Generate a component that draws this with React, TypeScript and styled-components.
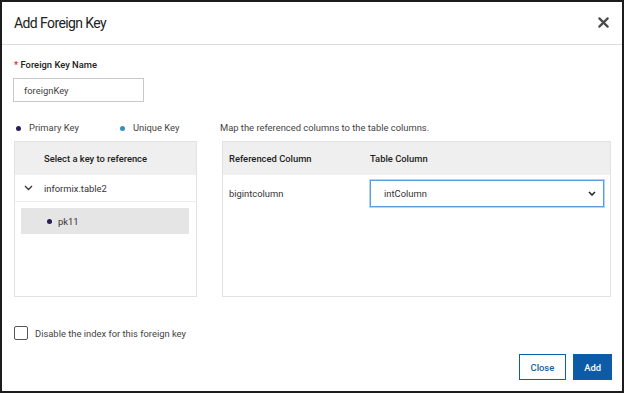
import React, { useState } from "react";
import styled, { createGlobalStyle } from "styled-components";

const GlobalStyle = createGlobalStyle`
  html, body {
    margin: 0;
    padding: 0;
    background: #fff;
  }
  * {
    box-sizing: border-box;
  }
`;

const App: React.FC = () => {
  const [keyName, setKeyName] = useState<string>("foreignKey");
  const [disableIndex, setDisableIndex] = useState<boolean>(false);

  return (
    <>
      <GlobalStyle />
      <Dialog>
        <Header>
          <Title>Add Foreign Key</Title>
          <CloseIcon aria-label="close">
            <svg width="11" height="11" viewBox="0 0 12 12">
              <path
                d="M1.5 1.5 L10.5 10.5 M10.5 1.5 L1.5 10.5"
                stroke="#4a4a4a"
                strokeWidth="2.4"
                strokeLinecap="round"
              />
            </svg>
          </CloseIcon>
        </Header>

        <Body>
          <FieldLabel>
            <Required>*</Required> Foreign Key Name
          </FieldLabel>
          <NameInput
            value={keyName}
            onChange={(e) => setKeyName(e.target.value)}
          />

          <Columns>
            <LeftColumn>
              <Legend>
                <LegendItem>
                  <Dot $color="#2b1b57" />
                  Primary Key
                </LegendItem>
                <LegendItem>
                  <Dot $color="#3a8ec2" />
                  Unique Key
                </LegendItem>
              </Legend>
              <Panel>
                <PanelHeader $indent={29}>Select a key to reference</PanelHeader>
                <TreeRow>
                  <Chevron>
                    <svg width="9" height="6" viewBox="0 0 9 6">
                      <path
                        d="M1 1 L4.5 4.5 L8 1"
                        stroke="#333"
                        strokeWidth="1.3"
                        fill="none"
                      />
                    </svg>
                  </Chevron>
                  informix.table2
                </TreeRow>
                <KeyRow>
                  <Dot $color="#2b1b57" />
                  pk11
                </KeyRow>
              </Panel>
            </LeftColumn>

            <RightColumn>
              <Caption>Map the referenced columns to the table columns.</Caption>
              <Panel>
                <MapHeader>
                  <RefCell>Referenced Column</RefCell>
                  <span>Table Column</span>
                </MapHeader>
                <MapRow>
                  <RefCell>bigintcolumn</RefCell>
                  <SelectBox>
                    intColumn
                    <svg width="8" height="5" viewBox="0 0 8 5">
                      <path
                        d="M1 1 L4 4 L7 1"
                        stroke="#222"
                        strokeWidth="1.5"
                        fill="none"
                      />
                    </svg>
                  </SelectBox>
                </MapRow>
              </Panel>
            </RightColumn>
          </Columns>

          <CheckRow>
            <CheckBox
              type="checkbox"
              checked={disableIndex}
              onChange={() => setDisableIndex((prev) => !prev)}
            />
            Disable the index for this foreign key
          </CheckRow>
        </Body>

        <Footer>
          <Button>Close</Button>
          <Button $primary>Add</Button>
        </Footer>
      </Dialog>
    </>
  );
};

const Dialog = styled.div`
  width: 624px;
  height: 393px;
  border: 2px solid #1c1c1c;
  background: #fff;
  display: flex;
  flex-direction: column;
  font-family: Roboto, "Liberation Sans", sans-serif;
  color: #333;
`;

const Header = styled.div`
  height: 43px;
  flex-shrink: 0;
  display: flex;
  align-items: center;
  justify-content: space-between;
  padding: 0 13px 0 12px;
  border-bottom: 1px solid #dcdcdc;
`;

const Title = styled.h1`
  margin: 0;
  font-size: 14px;
  letter-spacing: -0.6px;
  font-weight: 400;
  color: #222;
`;

const CloseIcon = styled.span`
  display: flex;
  margin-bottom: 2px;
  cursor: pointer;
`;

const Body = styled.div`
  flex: 1;
  padding: 14px 11px 0 12px;
  font-size: 9.4px;
`;

const FieldLabel = styled.div`
  line-height: 12px;
  font-weight: 500;
  color: #222;
  margin-bottom: 7px;
`;

const Required = styled.span`
  color: #d3262b;
`;

const NameInput = styled.input`
  display: block;
  width: 131px;
  height: 24px;
  margin: 0 0 0 -1px;
  padding: 0 0 0 10px;
  border: 1px solid #c9c9c9;
  font-family: inherit;
  font-size: 9.4px;
  color: #444;
  outline: none;
`;

const Columns = styled.div`
  display: grid;
  grid-template-columns: 183px 1fr;
  column-gap: 25px;
  margin-top: 20px;
`;

const LeftColumn = styled.div`
  display: flex;
  flex-direction: column;
`;

const RightColumn = styled.div`
  display: flex;
  flex-direction: column;
`;

const Legend = styled.div`
  display: flex;
  height: 12px;
  line-height: 12px;
  margin: 0 0 7px 2px;
`;

const LegendItem = styled.span`
  display: flex;
  align-items: center;
  gap: 8px;
  min-width: 104px;
  color: #444;
`;

const Dot = styled.span<{ $color: string }>`
  width: 5px;
  height: 5px;
  border-radius: 50%;
  background: ${(p) => p.$color};
  flex-shrink: 0;
`;

const Caption = styled.div`
  height: 12px;
  line-height: 12px;
  margin: 0 0 7px -2px;
  color: #444;
`;

const Panel = styled.div`
  height: 156px;
  border: 1px solid #e2e2e2;
  display: flex;
  flex-direction: column;
`;

const PanelHeader = styled.div<{ $indent: number }>`
  height: 33px;
  display: flex;
  align-items: center;
  padding-left: ${(p) => p.$indent}px;
  background: #efefef;
  font-weight: 500;
  color: #222;
`;

const TreeRow = styled.div`
  height: 27px;
  display: flex;
  align-items: center;
  padding-left: 9px;
  border-bottom: 1px solid #ececec;
  color: #333;
`;

const Chevron = styled.span`
  display: flex;
  width: 20px;
`;

const KeyRow = styled.div`
  height: 26px;
  margin: 6px 7px 0 6px;
  display: flex;
  align-items: center;
  gap: 6px;
  padding-left: 26px;
  background: #e5e5e5;
  color: #333;
`;

const MapHeader = styled.div`
  height: 33px;
  display: grid;
  grid-template-columns: 147px 1fr;
  align-items: center;
  background: #efefef;
  font-weight: 500;
  color: #222;
`;

const RefCell = styled.span`
  padding-left: 6px;
`;

const MapRow = styled.div`
  display: grid;
  grid-template-columns: 147px 1fr;
  align-items: center;
  padding: 5px 6px 0 0;
`;

const SelectBox = styled.div`
  height: 27px;
  display: flex;
  align-items: center;
  justify-content: space-between;
  padding: 0 7px 0 13px;
  border: 1px solid #5d9ed8;
  box-shadow: 0 0 0 1px #b4d4f0;
  color: #333;
`;

const CheckRow = styled.label`
  display: flex;
  align-items: center;
  gap: 7px;
  margin-top: 29px;
  color: #444;
`;

const CheckBox = styled.input`
  appearance: none;
  width: 14px;
  height: 14px;
  margin: 0;
  border: 1px solid #555;
  border-radius: 2px;
  background: #fff;
`;

const Footer = styled.div`
  display: flex;
  justify-content: flex-end;
  gap: 7px;
  padding: 0 10px 11px 0;
`;

const Button = styled.button<{ $primary?: boolean }>`
  height: 26px;
  padding: 0 ${(p) => (p.$primary ? "10px" : "11px")};
  font-family: inherit;
  font-size: 9.4px;
  font-weight: 500;
  border: 1px solid #0f5fa8;
  background: ${(p) => (p.$primary ? "#0d5ba6" : "#fff")};
  color: ${(p) => (p.$primary ? "#fff" : "#0f5fa8")};
  cursor: pointer;
`;

export default App;
